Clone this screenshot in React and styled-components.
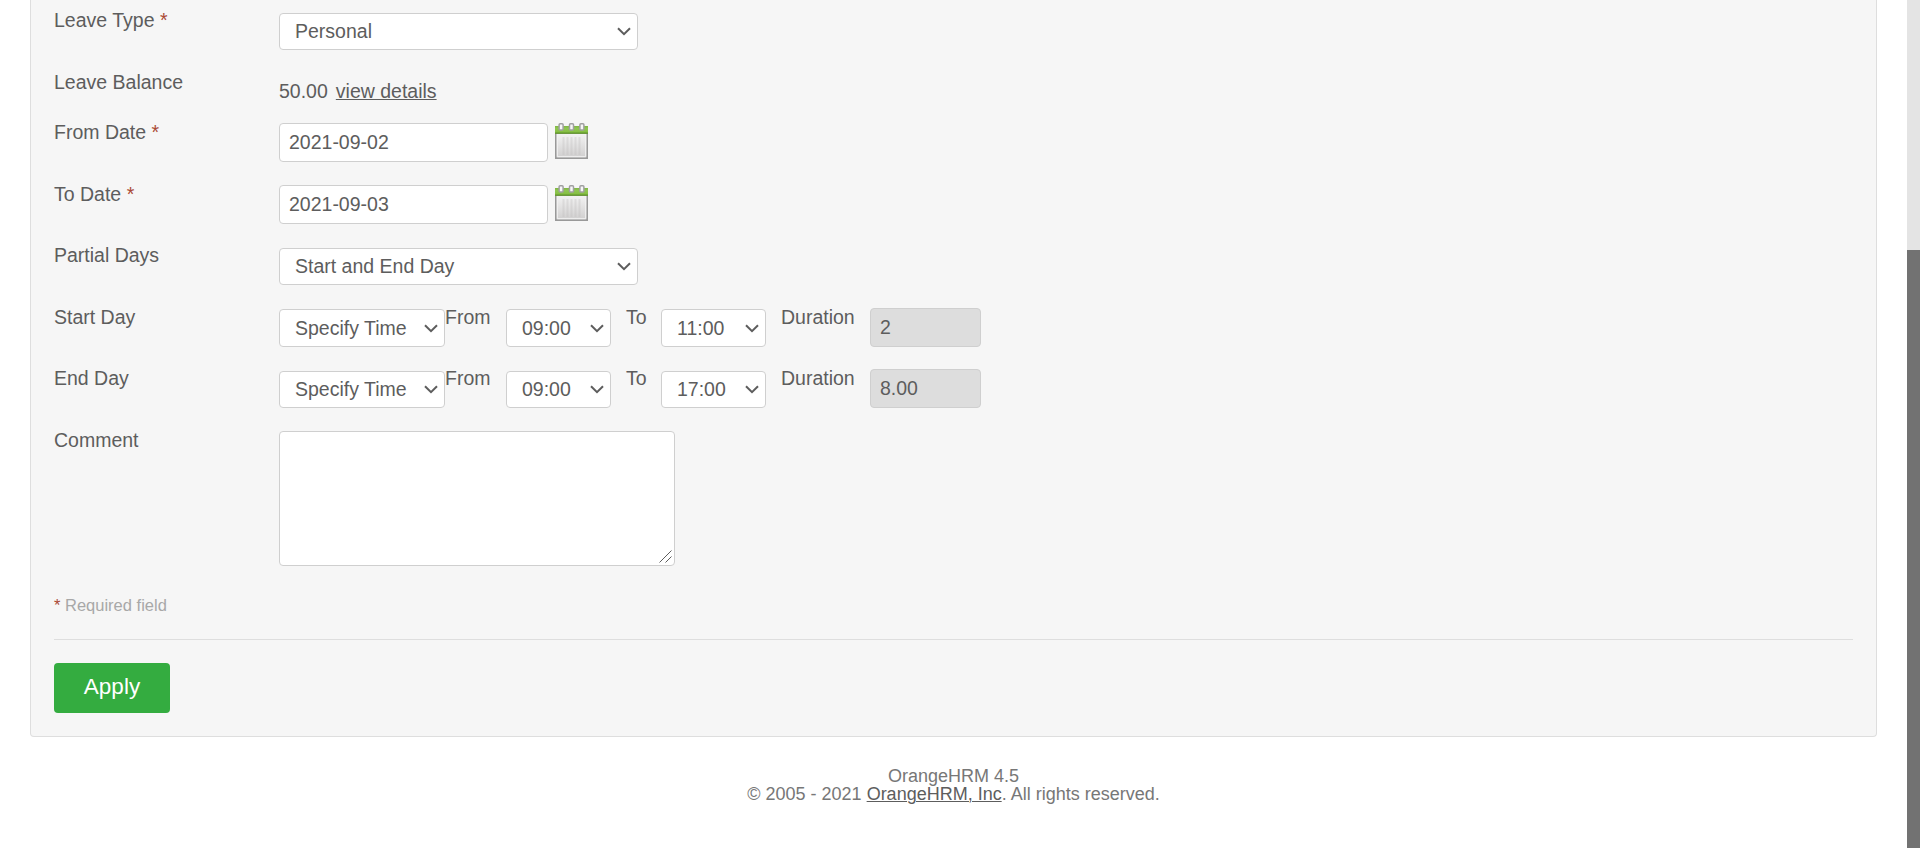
import React from "react";
import styled, { createGlobalStyle } from "styled-components";

const GlobalStyle = createGlobalStyle`
  * { box-sizing: border-box; }
  html, body { margin: 0; height: 848px; overflow: hidden; background: #fff; }
  body, select, input, textarea, button {
    font-family: "Liberation Sans", Arial, sans-serif;
    font-size: 19.5px;
    color: #5d5d5d;
  }
`;

const Page = styled.div`
  display: flex;
  height: 848px;
`;

const Content = styled.main`
  flex: 1;
  padding: 0 30px;
`;

const Scrollbar = styled.div`
  width: 13px;
  padding-top: 250px;
  background: #e4e4e4;
`;

const Thumb = styled.div`
  height: 100%;
  background: #727272;
`;

const Panel = styled.form`
  height: 737px;
  padding: 8px 23px 0;
  background: #f6f6f6;
  border: 1px solid #dedede;
  border-top: 0;
  border-radius: 0 0 4px 4px;
`;

const Row = styled.div`
  display: flex;
  align-items: flex-start;
  height: ${(p) => p.$height}px;
`;

const Label = styled.label`
  width: 225px;
  line-height: 24px;
  white-space: nowrap;
`;

const InlineLabel = styled.label`
  width: ${(p) => p.$width}px;
  margin-left: ${(p) => p.$gap || 0}px;
  line-height: 24px;
`;

const Star = styled.em`
  font-style: normal;
  color: #aa4935;
`;

const Balance = styled.div`
  display: flex;
  gap: 8px;
  margin-top: 9px;
  line-height: 24px;
`;

const Link = styled.a`
  color: #5d5d5d;
  text-decoration: underline;
  text-decoration-thickness: 1px;
  text-underline-offset: 1px;
`;

const TextInput = styled.input`
  width: ${(p) => p.$width}px;
  height: 39px;
  margin: 3px 0 0;
  padding: 0 9px 1px;
  background: #fff;
  border: 1px solid #cfcfcf;
  border-radius: 4px;
  outline: 0;

  &:disabled { background: #dddddd; }
`;

const SelectBox = styled.div`
  display: grid;
  align-items: center;
  width: ${(p) => p.$width}px;
  height: ${(p) => p.$height || 37}px;
  margin-top: ${(p) => p.$top || 5}px;
  background: #fff;
  border: 1px solid #cfcfcf;
  border-radius: 4px;

  > * { grid-area: 1 / 1; }
  > svg { justify-self: end; margin-right: 6px; pointer-events: none; }
`;

const NativeSelect = styled.select`
  appearance: none;
  width: 100%;
  height: 100%;
  padding: 0 0 1px 15px;
  background: transparent;
  border: 0;
  outline: 0;
`;

const Comment = styled.textarea`
  width: 396px;
  height: 135px;
  margin: 3px 0 0;
  background: #fff;
  border: 1px solid #cfcfcf;
  border-radius: 4px;
  outline: 0;
  resize: none;
`;

const CommentBox = styled.div`
  display: grid;

  > * { grid-area: 1 / 1; }
  > svg { place-self: end; margin: 0 3px 3px 0; }
`;

const IconButton = styled.span`
  margin: 3px 0 0 7px;
  line-height: 0;
`;

const Required = styled.p`
  margin: 0;
  height: 44px;
  font-size: 16.5px;
  line-height: 20px;
  color: #a8a8a8;
`;

const Divider = styled.hr`
  height: 1px;
  margin: 0 0 23px;
  border: 0;
  background: #dedede;
`;

const Apply = styled.button`
  display: block;
  width: 116px;
  height: 50px;
  padding: 0 0 2px;
  border: 0;
  border-radius: 4px;
  background: #34ac40;
  color: #fff;
  font-size: 22.5px;
`;

const Footer = styled.footer`
  padding-top: 30px;
  text-align: center;
  font-size: 18px;
  line-height: 18px;
  color: #777;
`;

const Chevron = () => (
  <svg width="14" height="9" viewBox="0 0 14 9" fill="none" stroke="#5d5d5d" strokeWidth="2">
    <path d="M1 1.2 7 7.2l6-6" />
  </svg>
);

const Grip = () => (
  <svg width="13" height="13" viewBox="0 0 13 13" stroke="#5d5d5d" strokeWidth="1">
    <path d="M0.5 12.5 12.5 0.5M6.5 12.5l6-6" />
  </svg>
);

const Calendar = () => (
  <svg width="33" height="36" viewBox="0 0 33 36">
    <defs>
      <linearGradient id="sheet" x1="0" y1="0" x2="0" y2="1">
        <stop offset="0" stopColor="#f4f4f4" />
        <stop offset="1" stopColor="#cfcece" />
      </linearGradient>
      <linearGradient id="band" x1="0" y1="0" x2="0" y2="1">
        <stop offset="0" stopColor="#7fb544" />
        <stop offset="0.3" stopColor="#8fc651" />
        <stop offset="0.7" stopColor="#87c046" />
        <stop offset="1" stopColor="#568d20" />
      </linearGradient>
    </defs>
    <rect x="0.8" y="10" width="31.4" height="25.2" fill="url(#sheet)" stroke="#999" strokeWidth="1.6" />
    <path d="M2.3 11v22.7h28.4V11" fill="none" stroke="#f3f3f3" strokeWidth="1" />
    <path d="M8.5 14v18M12.5 14v18M16.5 14v18M20.5 14v18M24.5 14v18" stroke="#bcbaba" strokeWidth="2" opacity=".3" />
    <rect x="0" y="3" width="33" height="7.8" fill="url(#band)" />
    {[4.1, 14.5, 24.9].map((x) => (
      <rect key={x} x={x} y="0.8" width="4" height="6.2" rx="1" fill="#f7f7f7" stroke="#a0a0a0" strokeWidth="1.5" />
    ))}
  </svg>
);

const Select = ({ value, ...box }) => (
  <SelectBox {...box}>
    <NativeSelect>
      <option>{value}</option>
    </NativeSelect>
    <Chevron />
  </SelectBox>
);

const DateRow = ({ label, value, height }) => (
  <Row $height={height}>
    <Label>{label} <Star>*</Star></Label>
    <TextInput $width={269} defaultValue={value} />
    <IconButton><Calendar /></IconButton>
  </Row>
);

const TimeRow = ({ label, from, to, duration, height, selectHeight, selectTop }) => (
  <Row $height={height}>
    <Label>{label}</Label>
    <Select value="Specify Time" $width={166} $height={selectHeight} $top={selectTop} />
    <InlineLabel $width={61}>From</InlineLabel>
    <Select value={from} $width={105} $height={selectHeight} $top={selectTop} />
    <InlineLabel $width={35} $gap={15}>To</InlineLabel>
    <Select value={to} $width={105} $height={selectHeight} $top={selectTop} />
    <InlineLabel $width={89} $gap={15}>Duration</InlineLabel>
    <TextInput $width={111} defaultValue={duration} disabled />
  </Row>
);

export default function App() {
  return (
    <>
      <GlobalStyle />
      <Page>
        <Content>
          <Panel>
            <Row $height={62}>
              <Label>Leave Type <Star>*</Star></Label>
              <Select value="Personal" $width={359} />
            </Row>
            <Row $height={50}>
              <Label>Leave Balance</Label>
              <Balance>
                <span>50.00</span>
                <Link>view details</Link>
              </Balance>
            </Row>
            <DateRow label="From Date" value="2021-09-02" height={62} />
            <DateRow label="To Date" value="2021-09-03" height={61} />
            <Row $height={62}>
              <Label>Partial Days</Label>
              <Select value="Start and End Day" $width={359} />
            </Row>
            <TimeRow label="Start Day" from="09:00" to="11:00" duration="2" height={61} selectHeight={38} selectTop={4} />
            <TimeRow label="End Day" from="09:00" to="17:00" duration="8.00" height={62} selectHeight={37} selectTop={5} />
            <Row $height={167}>
              <Label>Comment</Label>
              <CommentBox>
                <Comment />
                <Grip />
              </CommentBox>
            </Row>
            <Required><Star>*</Star> Required field</Required>
            <Divider />
            <Apply type="button">Apply</Apply>
          </Panel>
          <Footer>
            OrangeHRM 4.5
            <br />
            © 2005 - 2021 <Link>OrangeHRM, Inc</Link>. All rights reserved.
          </Footer>
        </Content>
        <Scrollbar>
          <Thumb />
        </Scrollbar>
      </Page>
    </>
  );
}
